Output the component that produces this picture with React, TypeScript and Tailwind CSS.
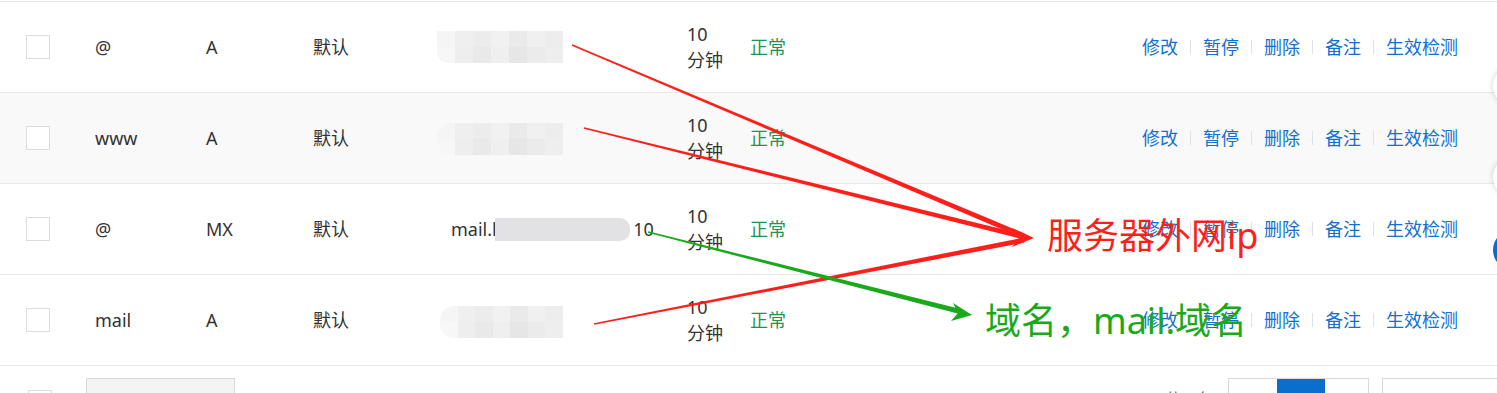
import React from "react";

const font = { fontFamily: '"Noto Sans", "Noto Sans CJK SC", sans-serif' };

type Row = {
  host: string;
  type: string;
  value: "blur1" | "blur2" | "mx" | "blur4";
  striped?: boolean;
};

const rows: Row[] = [
  { host: "@", type: "A", value: "blur1" },
  { host: "www", type: "A", value: "blur2", striped: true },
  { host: "@", type: "MX", value: "mx" },
  { host: "mail", type: "A", value: "blur4" },
];

const actions = ["修改", "暂停", "删除", "备注", "生效检测"];

// mosaic colours of the masked ip
const tiles = [
  ["#f5f5f5", "#efefef", "#ececec", "#f1f1f1", "#eaeaea", "#f0f0f0", "#ededed"],
  ["#f7f7f7", "#eeeeee", "#e9e9e9", "#efefef", "#e6e6e6", "#ebebeb", "#eeeeee"],
];

const Mosaic = ({ w, rounded }: { w: number; rounded?: boolean }) => (
  <div
    className={`flex flex-col overflow-hidden blur-[0.6px] ${rounded ? "rounded-l-[14px]" : "rounded-bl-[10px]"}`}
    style={{ width: w }}
  >
    {tiles.map((r, i) => (
      <div key={i} className="flex h-[16px]">
        {r.map((c, j) => (
          <div key={j} className="flex-1" style={{ background: c }} />
        ))}
      </div>
    ))}
  </div>
);

const Checkbox = () => (
  <div className="w-[24px] h-[24px] border border-[#dcdcdc] bg-white" />
);

function taper(x1: number, y1: number, x2: number, y2: number, w1: number, w2: number) {
  const dx = x2 - x1;
  const dy = y2 - y1;
  const len = Math.hypot(dx, dy);
  const nx = -dy / len;
  const ny = dx / len;
  const p = [
    [x1 + (nx * w1) / 2, y1 + (ny * w1) / 2],
    [x2 + (nx * w2) / 2, y2 + (ny * w2) / 2],
    [x2 - (nx * w2) / 2, y2 - (ny * w2) / 2],
    [x1 - (nx * w1) / 2, y1 - (ny * w1) / 2],
  ];
  return p.map((q) => q.join(",")).join(" ");
}

const Annotations = () => (
  <svg
    className="absolute left-0 top-0 pointer-events-none"
    width="1497"
    height="393"
    viewBox="0 0 1497 393"
  >
    <g fill="#ff1f1a">
      <polygon points={taper(572, 45, 1024, 236, 1.6, 5)} />
      <polygon points={taper(584, 128, 1024, 237, 1.6, 5)} />
      <polygon points={taper(594, 324, 1024, 240, 1.6, 5)} />
      <polygon points="1034,238 1012,228 1019,238 1012,247" />
    </g>
    <g fill="#1aa91a">
      <polygon points={taper(648, 232, 962, 312, 1.6, 5)} />
      <polygon points="972,315 953,303 958,313 951,321" />
    </g>
  </svg>
);

const Value = ({ v }: { v: Row["value"] }) => {
  if (v === "mx")
    return (
      <div className="flex items-center pl-[14px] text-[#333]">
        <span>mail.li</span>
        <div className="-ml-[6px] w-[135px] h-[23px] rounded-r-[10px] bg-[#e2e2e4] blur-[0.5px]" />
        <span className="ml-[3px]">10</span>
      </div>
    );
  if (v === "blur1") return <Mosaic w={126} />;
  if (v === "blur2")
    return (
      <div className="pt-[2px]">
        <Mosaic w={126} rounded />
      </div>
    );
  return (
    <div className="pl-[3px] pt-[4px]">
      <Mosaic w={123} rounded />
    </div>
  );
};

export default function App() {
  return (
    <div className="relative w-[1497px] h-[393px] overflow-hidden bg-white text-[18px] text-[#333]" style={font}>
      <div className="pt-[1px]">
        <div className="border-t border-[#e6e8eb]">
          {rows.map((r, i) => (
            <div
              key={i}
              className={`flex items-center h-[91px] border-b border-[#e6e8eb] ${r.striped ? "bg-[#f9f9fa]" : "bg-white"}`}
            >
              <div className="w-[95px] pl-[26px]">
                <Checkbox />
              </div>
              <div className="w-[111px]">{r.host}</div>
              <div className="w-[107px]">{r.type}</div>
              <div className="w-[124px]">默认</div>
              <div className="w-[250px]">
                <Value v={r.value} />
              </div>
              <div className="w-[63px] leading-[26px]">
                10
                <br />
                分钟
              </div>
              <div className="flex-1 text-[#1d9550]">正常</div>
              <div className="flex items-center pr-[39px] text-[#1170d0]">
                {actions.map((a, j) => (
                  <React.Fragment key={a}>
                    {j > 0 && <span className="mx-[12px] w-px h-[14px] bg-[#dde2e8]" />}
                    <span>{a}</span>
                  </React.Fragment>
                ))}
              </div>
            </div>
          ))}
        </div>
      </div>

      {/* footer: batch bar + pagination */}
      <div className="flex items-start pt-[12px]">
        <div className="pl-[28px] pt-[12px]">
          <Checkbox />
        </div>
        <div className="ml-[34px] w-[149px] h-[36px] border border-[#d9d9d9] bg-[#f4f4f4]" />
        <div className="flex-1" />
        <div className="pt-[9px] text-[15px] text-[#666]">共 4 条</div>
        <div className="ml-[16px] flex w-[141px] h-[36px] border border-[#d9d9d9]">
          <div className="w-[48px]" />
          <div className="w-[48px] bg-[#0a6ecd]" />
        </div>
        <div className="ml-[13px] -mr-[20px] w-[135px] h-[36px] border border-[#d9d9d9]" />
      </div>

      {/* floating side buttons */}
      <div className="absolute left-[1493px] top-[66px] w-[44px] h-[40px] rounded-full bg-white shadow-[0_0_6px_rgba(0,0,0,0.18)]" />
      <div className="absolute left-[1493px] top-[157px] w-[44px] h-[40px] rounded-full bg-white shadow-[0_0_6px_rgba(0,0,0,0.18)]" />
      <div className="absolute left-[1493px] top-[230px] w-[44px] h-[40px] rounded-full bg-[#0a6ecd]" />

      <Annotations />
      <div className="absolute left-[1047px] top-[214px] text-[36px] leading-[44px] text-[#ff1f1a] pointer-events-none">
        服务器外网ip
      </div>
      <div className="absolute left-[985px] top-[299px] text-[36px] leading-[44px] text-[#1aa91a] pointer-events-none">
        域名，mail.域名
      </div>
    </div>
  );
}
